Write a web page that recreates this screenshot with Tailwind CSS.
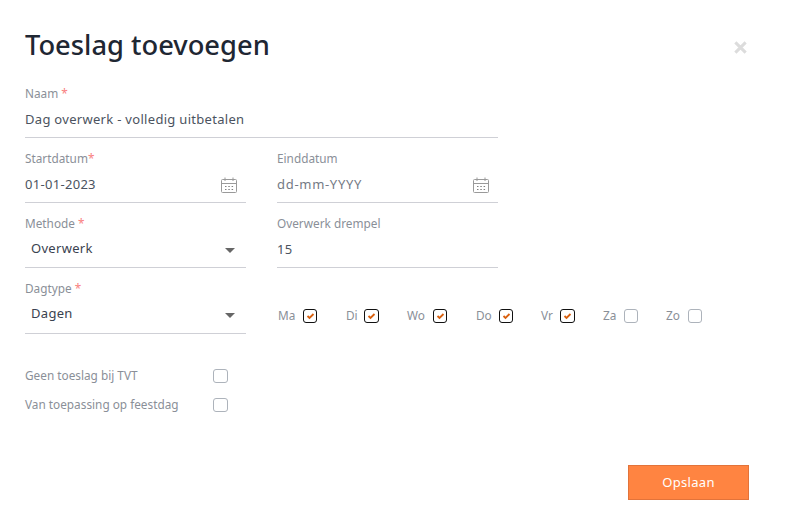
<!DOCTYPE html>
<html lang="en">
<head>
    <meta charset="UTF-8">
    <title>Toeslag toevoegen</title>
    <script src="https://cdn.jsdelivr.net/npm/@tailwindcss/browser@4"></script>
</head>
<body class="bg-white font-['Noto_Sans',sans-serif] text-[#4a5568]">
    <div class="w-[794px] h-[531px] pl-[25px] pr-[46px] pt-[23px] flex flex-col overflow-hidden">
        <div class="flex items-center justify-between h-[42px]">
            <h1 class="text-[27.3px] leading-[42px] mt-[2px] font-medium text-[#1f2733]">Toeslag toevoegen</h1>
            <svg class="w-[15px] h-[15px] mt-[7px]" viewBox="0 0 16 16"><path d="M2.5 2.5 13.5 13.5M13.5 2.5 2.5 13.5" stroke="#dcdcdc" stroke-width="3.2" fill="none"/></svg>
        </div>

        <div class="w-[473px] mt-[19px] h-[54px] border-b border-[#cfd0d6]">
            <div class="text-[11.8px] leading-[19px] text-[#8a8f98]">Naam <span class="text-[#f98080]">*</span></div>
            <div class="text-[13px] leading-[20px] mt-[6px] tracking-[0.3px] text-[#4b5360]">Dag overwerk - volledig uitbetalen</div>
        </div>

        <div class="grid grid-cols-[221px_221px] gap-x-[31px] mt-[11px] w-[473px]">
            <div class="h-[54px] border-b border-[#cfd0d6]">
                <div class="text-[11.8px] leading-[19px] text-[#8a8f98]">Startdatum<span class="text-[#f98080]">*</span></div>
                <div class="flex items-center justify-between pr-[9px] mt-[7px] h-[20px]">
                    <span class="text-[13px] tracking-[0.3px] text-[#4b5360]">01-01-2023</span>
                    <svg class="w-[16px] h-[16px] -mt-[1px]" viewBox="0 0 16 16" fill="none" stroke="#9a9a9a"><rect x="0.5" y="2.5" width="15" height="13" rx="1"/><path d="M0.5 6.5H15.5M4 0.5V4M12 0.5V4"/><path d="M4 9.5h1.5M7.3 9.5h1.5M10.6 9.5h1.5M4 12.5h1.5M7.3 12.5h1.5M10.6 12.5h1.5" stroke="#808080"/></svg>
                </div>
            </div>
            <div class="h-[54px] border-b border-[#cfd0d6]">
                <div class="text-[11.8px] leading-[19px] text-[#8a8f98]">Einddatum</div>
                <div class="flex items-center justify-between pr-[9px] mt-[7px] h-[20px]">
                    <span class="text-[13px] tracking-[0.7px] text-[#747a85]">dd-mm-YYYY</span>
                    <svg class="w-[16px] h-[16px] -mt-[1px]" viewBox="0 0 16 16" fill="none" stroke="#9a9a9a"><rect x="0.5" y="2.5" width="15" height="13" rx="1"/><path d="M0.5 6.5H15.5M4 0.5V4M12 0.5V4"/><path d="M4 9.5h1.5M7.3 9.5h1.5M10.6 9.5h1.5M4 12.5h1.5M7.3 12.5h1.5M10.6 12.5h1.5" stroke="#808080"/></svg>
                </div>
            </div>

            <div class="h-[54px] mt-[11px] border-b border-[#cfd0d6]">
                <div class="text-[11.8px] leading-[19px] text-[#8a8f98]">Methode <span class="text-[#f98080]">*</span></div>
                <div class="flex items-center justify-between pl-[6px] pr-[11px] mt-[6px] h-[20px]">
                    <span class="text-[13px] tracking-[0.3px] text-[#3a4250]">Overwerk</span>
                    <div class="w-0 h-0 mt-[3px] border-x-[5px] border-x-transparent border-t-[5px] border-t-[#666]"></div>
                </div>
            </div>
            <div class="h-[54px] mt-[11px] border-b border-[#cfd0d6]">
                <div class="text-[11.8px] leading-[19px] text-[#8a8f98]">Overwerk drempel</div>
                <div class="text-[13px] leading-[20px] mt-[6px] tracking-[0.3px] text-[#4b5360]">15</div>
            </div>

            <div class="h-[55px] mt-[11px] border-b border-[#cfd0d6]">
                <div class="text-[11.8px] leading-[19px] text-[#8a8f98]">Dagtype <span class="text-[#f98080]">*</span></div>
                <div class="flex items-center justify-between pl-[6px] pr-[11px] mt-[6px] h-[20px]">
                    <span class="text-[13px] tracking-[0.3px] text-[#3a4250]">Dagen</span>
                    <div class="w-0 h-0 mt-[3px] border-x-[5px] border-x-transparent border-t-[5px] border-t-[#666]"></div>
                </div>
            </div>
            <div class="mt-[11px] w-[440px] h-[55px] flex items-center pt-[19px] pl-[1px] text-[11.8px] text-[#8a8f98]">
                <div class="w-[68px] flex items-center"><span class="w-[25px]">Ma</span><span class="w-[14px] h-[14px] rounded-[3px] border border-[#111] flex items-center justify-center"><svg class="w-[9px] h-[8px]" viewBox="0 0 9 8"><path d="M1.5 4 3.5 6 7.5 2" stroke="#d9600f" stroke-width="1.8" fill="none"/></svg></span></div>
                <div class="w-[61px] flex items-center"><span class="w-[18px]">Di</span><span class="w-[15px] h-[14px] rounded-[3px] border border-[#111] flex items-center justify-center"><svg class="w-[9px] h-[8px]" viewBox="0 0 9 8"><path d="M1.5 4 3.5 6 7.5 2" stroke="#d9600f" stroke-width="1.8" fill="none"/></svg></span></div>
                <div class="w-[69px] flex items-center"><span class="w-[26px]">Wo</span><span class="w-[14px] h-[14px] rounded-[3px] border border-[#111] flex items-center justify-center"><svg class="w-[9px] h-[8px]" viewBox="0 0 9 8"><path d="M1.5 4 3.5 6 7.5 2" stroke="#d9600f" stroke-width="1.8" fill="none"/></svg></span></div>
                <div class="w-[65px] flex items-center"><span class="w-[23px]">Do</span><span class="w-[14px] h-[14px] rounded-[3px] border border-[#111] flex items-center justify-center"><svg class="w-[9px] h-[8px]" viewBox="0 0 9 8"><path d="M1.5 4 3.5 6 7.5 2" stroke="#d9600f" stroke-width="1.8" fill="none"/></svg></span></div>
                <div class="w-[62px] flex items-center"><span class="w-[19px]">Vr</span><span class="w-[15px] h-[14px] rounded-[3px] border border-[#111] flex items-center justify-center"><svg class="w-[9px] h-[8px]" viewBox="0 0 9 8"><path d="M1.5 4 3.5 6 7.5 2" stroke="#d9600f" stroke-width="1.8" fill="none"/></svg></span></div>
                <div class="w-[63px] flex items-center"><span class="w-[21px]">Za</span><span class="w-[14px] h-[14px] rounded-[3px] border border-[#adb3bb]"></span></div>
                <div class="flex items-center"><span class="w-[22px]">Zo</span><span class="w-[14px] h-[14px] rounded-[3px] border border-[#adb3bb]"></span></div>
            </div>
        </div>

        <div class="w-[203px] mt-[34px] flex flex-col gap-[14px] text-[11.8px] text-[#8a8f98]">
            <div class="flex items-center justify-between h-[15px]"><span>Geen toeslag bij TVT</span><span class="w-[15px] h-[14px] rounded-[3px] border border-[#adb3bb]"></span></div>
            <div class="flex items-center justify-between h-[15px]"><span>Van toepassing op feestdag</span><span class="w-[15px] h-[14px] rounded-[3px] border border-[#adb3bb]"></span></div>
        </div>

        <div class="flex justify-end mt-[53px] -mr-[1px]">
            <button class="w-[121px] h-[35px] pt-[1px] bg-[#ff8441] border border-[#e2733a] text-white text-[13px] tracking-[0.3px]">Opslaan</button>
        </div>
    </div>
</body>
</html>
